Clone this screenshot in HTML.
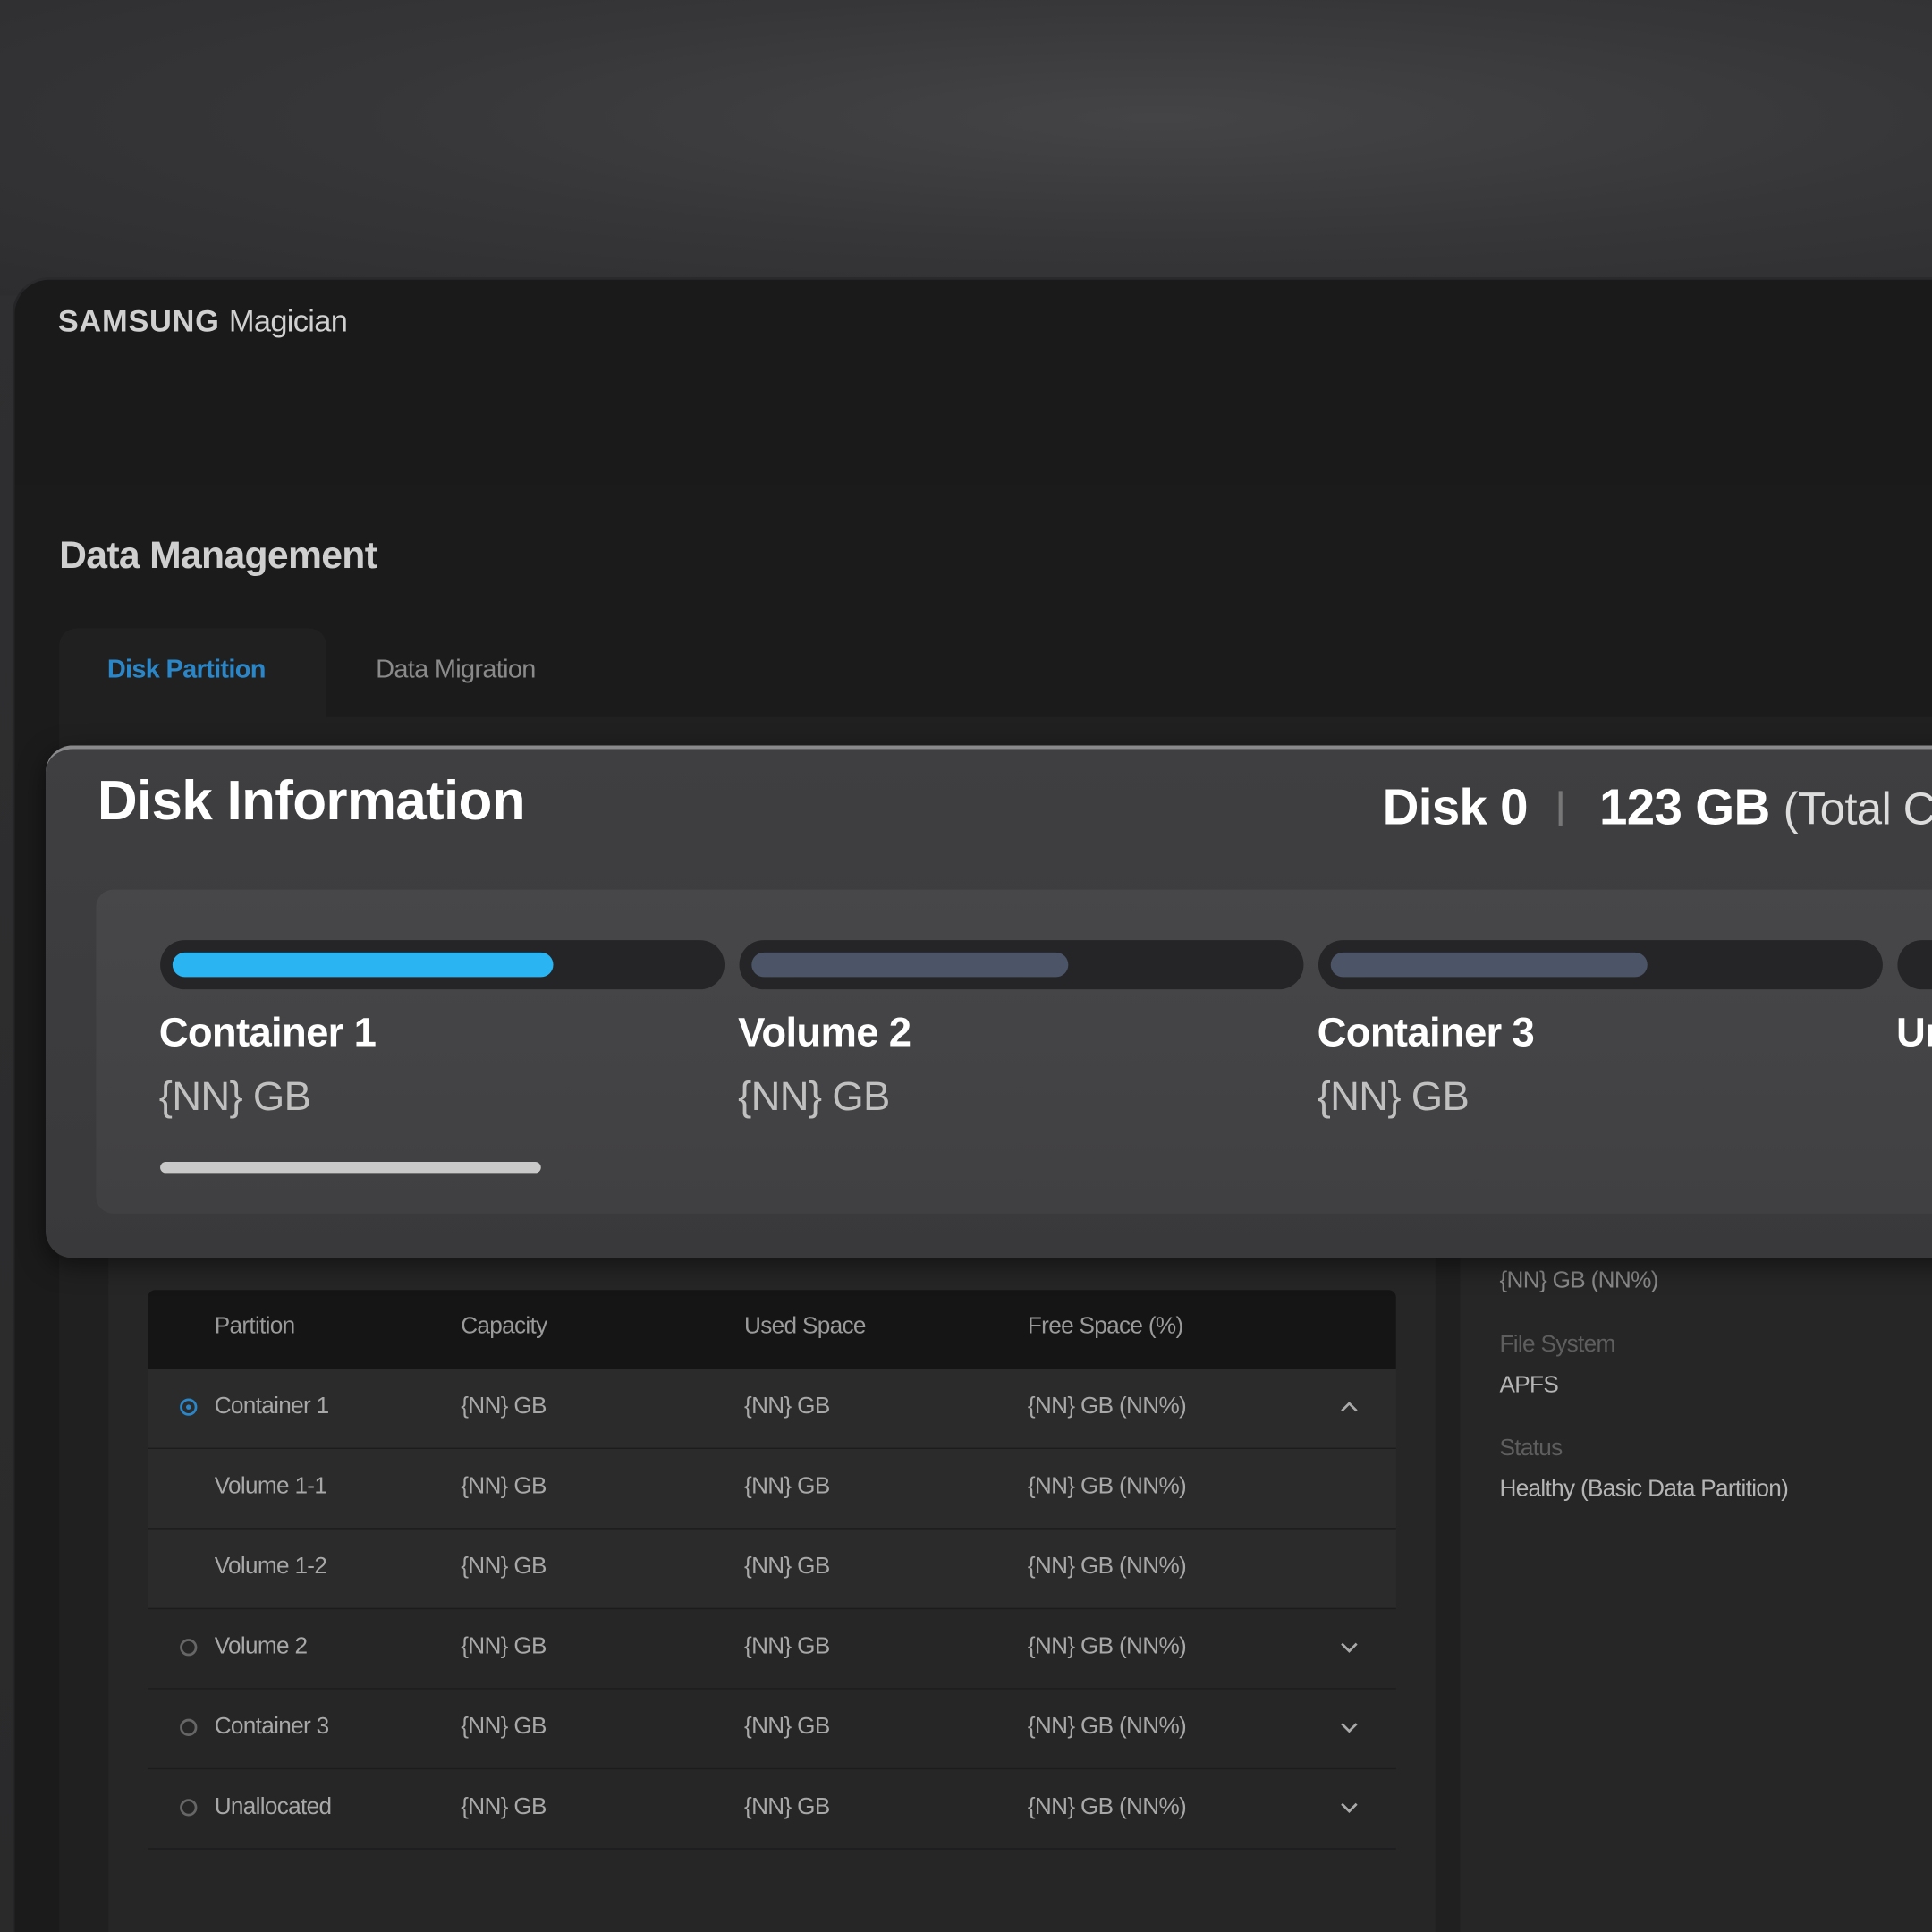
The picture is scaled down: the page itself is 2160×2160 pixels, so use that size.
<!DOCTYPE html>
<html><head><meta charset="utf-8"><style>
html,body{margin:0;padding:0;width:2160px;height:2160px;overflow:hidden;background:#2e2e30}
#s{position:absolute;left:0;top:0;width:1568px;height:1568px;transform:scale(1.377551);transform-origin:0 0;font-family:"Liberation Sans",sans-serif;background:linear-gradient(180deg,#333335 0%,#3b3b3d 8%,#2f2f31 14%,#2a2a2b 100%);overflow:hidden}
.a{position:absolute;white-space:nowrap}
.t{letter-spacing:-0.5px}
.row{position:absolute;left:120px;width:1013px;height:64px;border-bottom:1px solid #1c1c1d}
.row span{position:absolute;top:20px;font-size:19px;color:#a8a8a8;letter-spacing:-0.5px}
.rad{position:absolute;left:26px;top:24px;width:14px;height:14px;border:2px solid #666;border-radius:50%;box-sizing:border-box}
.chev{position:absolute;left:966px;top:22px}
</style></head><body><div id="s">
<div class="a" style="left:0;top:0;width:1568px;height:240px;background:radial-gradient(ellipse at 60% 40%,#444446 0%,#363638 50%,#2d2d2f 100%)"></div>
<!-- window -->
<div class="a" style="left:10px;top:225px;width:1600px;height:1400px;background:#1a1a1b;border-radius:30px 0 0 0;border-top:2px solid #2a2a2c;border-left:2px solid #252527"></div>
<div class="a" style="left:12px;top:393px;width:1560px;height:1200px;background:#1b1b1c"></div>
<div class="a t" style="left:47px;top:247px;font-size:25px;color:#d0d0d0;font-weight:bold;letter-spacing:0.5px">SAMSUNG <span style="font-weight:normal;letter-spacing:-0.5px">Magician</span></div>
<div class="a t" style="left:48px;top:433px;font-size:31px;color:#cfcfcf;font-weight:bold">Data Management</div>
<div class="a" style="left:48px;top:510px;width:217px;height:80px;background:#202021;border-radius:14px 14px 0 0"></div>
<div class="a" style="left:48px;top:582px;width:1540px;height:1000px;background:#202021"></div>
<div class="a t" style="left:87px;top:532px;font-size:21px;color:#2b86c8;font-weight:bold">Disk Partition</div>
<div class="a t" style="left:305px;top:532px;font-size:21px;color:#8a8a8a">Data Migration</div>
<!-- lower panels -->
<div class="a" style="left:88px;top:1000px;width:1077px;height:600px;background:#262627"></div>
<div class="a" style="left:1185px;top:1000px;width:400px;height:600px;background:#262627"></div>
<div class="a" style="left:120px;top:1047px;width:1013px;height:64px;background:#151516;border-radius:6px 6px 0 0"></div>
<div class="a t" style="left:174px;top:1066px;font-size:19px;color:#9a9a9a">Partition</div>
<div class="a t" style="left:374px;top:1066px;font-size:19px;color:#9a9a9a">Capacity</div>
<div class="a t" style="left:604px;top:1066px;font-size:19px;color:#9a9a9a">Used Space</div>
<div class="a t" style="left:834px;top:1066px;font-size:19px;color:#9a9a9a">Free Space (%)</div>

<div class="row" style="top:1111px;background:#2b2b2c"><div class="rad" style="border-color:#2b86c8"><div style="position:absolute;left:3px;top:3px;width:4px;height:4px;border-radius:50%;background:#2b86c8"></div></div><span style="left:54px">Container 1</span><span style="left:254px">{NN} GB</span><span style="left:484px">{NN} GB</span><span style="left:714px">{NN} GB (NN%)</span><svg class="chev" width="18" height="18" viewBox="0 0 18 18"><path d="M3 12 L9 6 L15 12" fill="none" stroke="#aaa" stroke-width="2"/></svg></div>
<div class="row" style="top:1176px;background:#2b2b2c"><span style="left:54px">Volume 1-1</span><span style="left:254px">{NN} GB</span><span style="left:484px">{NN} GB</span><span style="left:714px">{NN} GB (NN%)</span></div>
<div class="row" style="top:1241px;background:#2b2b2c"><span style="left:54px">Volume 1-2</span><span style="left:254px">{NN} GB</span><span style="left:484px">{NN} GB</span><span style="left:714px">{NN} GB (NN%)</span></div>
<div class="row" style="top:1306px"><div class="rad"></div><span style="left:54px">Volume 2</span><span style="left:254px">{NN} GB</span><span style="left:484px">{NN} GB</span><span style="left:714px">{NN} GB (NN%)</span><svg class="chev" width="18" height="18" viewBox="0 0 18 18"><path d="M3 6 L9 12 L15 6" fill="none" stroke="#aaa" stroke-width="2"/></svg></div>
<div class="row" style="top:1371px"><div class="rad"></div><span style="left:54px">Container 3</span><span style="left:254px">{NN} GB</span><span style="left:484px">{NN} GB</span><span style="left:714px">{NN} GB (NN%)</span><svg class="chev" width="18" height="18" viewBox="0 0 18 18"><path d="M3 6 L9 12 L15 6" fill="none" stroke="#aaa" stroke-width="2"/></svg></div>
<div class="row" style="top:1436px"><div class="rad"></div><span style="left:54px">Unallocated</span><span style="left:254px">{NN} GB</span><span style="left:484px">{NN} GB</span><span style="left:714px">{NN} GB (NN%)</span><svg class="chev" width="18" height="18" viewBox="0 0 18 18"><path d="M3 6 L9 12 L15 6" fill="none" stroke="#aaa" stroke-width="2"/></svg></div>

<div class="a t" style="left:1217px;top:1029px;font-size:19px;color:#8a8a8a">{NN} GB (NN%)</div>
<div class="a t" style="left:1217px;top:1081px;font-size:19px;color:#5e5e5e">File System</div>
<div class="a t" style="left:1217px;top:1114px;font-size:19px;color:#b5b5b5">APFS</div>
<div class="a t" style="left:1217px;top:1165px;font-size:19px;color:#5e5e5e">Status</div>
<div class="a t" style="left:1217px;top:1198px;font-size:19px;color:#b5b5b5">Healthy (Basic Data Partition)</div>

<!-- Disk information card -->
<div class="a" style="left:37px;top:605px;width:1600px;height:413px;background:linear-gradient(180deg,#3f3f41,#39393b);border-radius:22px 0 0 22px;border-top:3px solid #8a8a8c;box-shadow:0 6px 20px rgba(0,0,0,.5)"></div>
<div class="a t" style="left:79px;top:624px;font-size:45px;color:#fff;font-weight:bold">Disk Information</div>
<div class="a t" style="left:1122px;top:632px;font-size:41px;color:#fff;font-weight:bold">Disk 0</div>
<div class="a" style="left:1265px;top:642px;width:3px;height:28px;background:#777"></div>
<div class="a t" style="left:1298px;top:632px;font-size:41px;color:#fff;font-weight:bold">123 GB <span style="font-weight:normal;color:#ddd;font-size:37px">(Total Capacity)</span></div>
<div class="a" style="left:78px;top:722px;width:1560px;height:263px;background:linear-gradient(180deg,#474749,#403f41);border-radius:14px 0 0 14px"></div>
<div class="a" style="left:130px;top:763px;width:458px;height:40px;background:#252527;border-radius:20px"></div>
<div class="a" style="left:140px;top:773px;width:309px;height:20px;background:#2ab5f2;border-radius:10px"></div>
<div class="a" style="left:600px;top:763px;width:458px;height:40px;background:#252527;border-radius:20px"></div>
<div class="a" style="left:610px;top:773px;width:257px;height:20px;background:#4b5567;border-radius:10px"></div>
<div class="a" style="left:1070px;top:763px;width:458px;height:40px;background:#252527;border-radius:20px"></div>
<div class="a" style="left:1080px;top:773px;width:257px;height:20px;background:#4b5567;border-radius:10px"></div>
<div class="a" style="left:1540px;top:763px;width:458px;height:40px;background:#252527;border-radius:20px"></div>
<div class="a t" style="left:129px;top:819px;font-size:33px;color:#fff;font-weight:bold">Container 1</div>
<div class="a t" style="left:129px;top:871px;font-size:33px;color:#c0c0c0">{NN} GB</div>
<div class="a t" style="left:599px;top:819px;font-size:33px;color:#fff;font-weight:bold">Volume 2</div>
<div class="a t" style="left:599px;top:871px;font-size:33px;color:#c0c0c0">{NN} GB</div>
<div class="a t" style="left:1069px;top:819px;font-size:33px;color:#fff;font-weight:bold">Container 3</div>
<div class="a t" style="left:1069px;top:871px;font-size:33px;color:#c0c0c0">{NN} GB</div>
<div class="a t" style="left:1539px;top:819px;font-size:33px;color:#fff;font-weight:bold">Unallocated</div>
<div class="a" style="left:130px;top:943px;width:309px;height:9px;background:#c9c9c9;border-radius:5px"></div>
</div></body></html>
